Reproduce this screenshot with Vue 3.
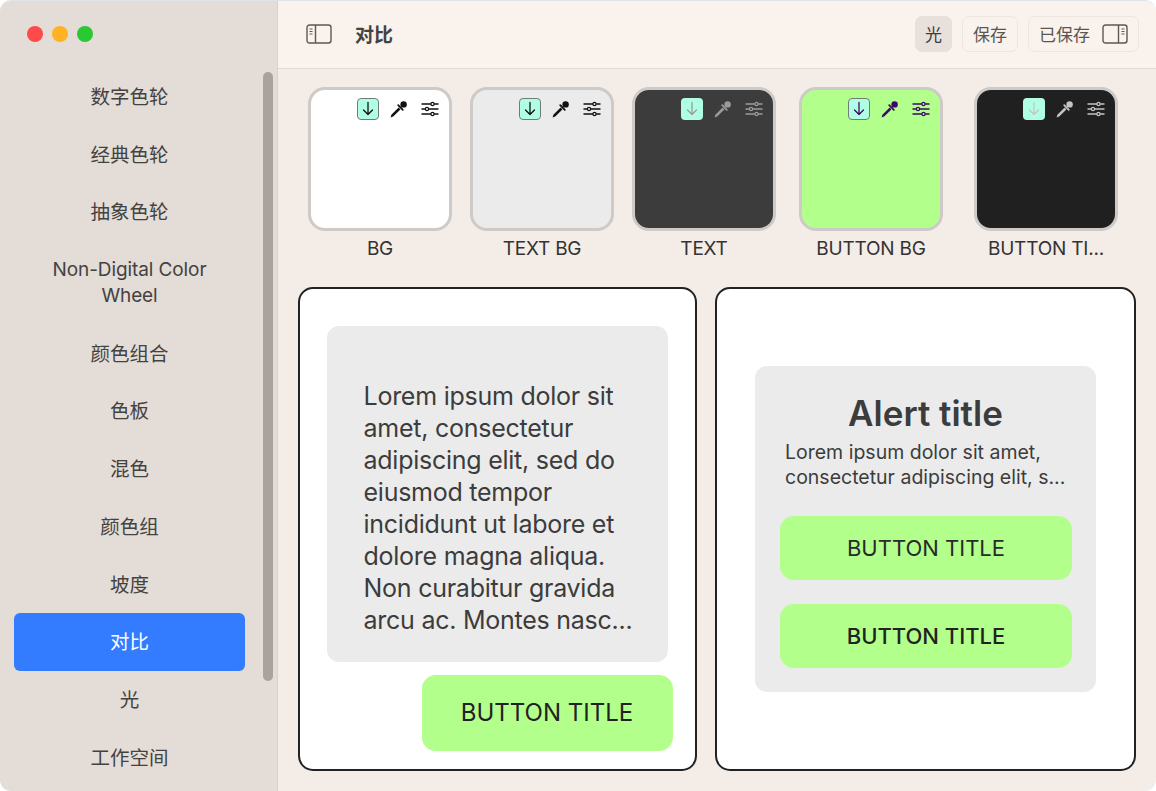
<template>
  <div class="window">
    <aside class="sidebar">
      <div class="lights">
        <span class="light red"></span>
        <span class="light yellow"></span>
        <span class="light green"></span>
      </div>
      <nav class="nav">
        <div
          v-for="item in navItems"
          :key="item"
          class="nav-item"
          :class="{ active: item === '对比', latin: item.startsWith('Non') }"
        >{{ item }}</div>
      </nav>
      <div class="scrollbar"></div>
    </aside>

    <main class="main">
      <header class="toolbar">
        <svg class="panel-icon" viewBox="0 0 26 20" fill="none" stroke="#5f5753" stroke-width="1.4">
          <rect x="1" y="1" width="24" height="18" rx="2.5" />
          <path d="M9.5 1v18" />
          <path d="M3.5 5h3M3.5 7.5h3M3.5 10h3" stroke-width="1" />
        </svg>
        <h1 class="title">对比</h1>
        <div class="actions">
          <button class="btn selected">光</button>
          <button class="btn">保存</button>
          <button class="btn saved">
            已保存
            <svg class="panel-icon" viewBox="0 0 26 20" fill="none" stroke="#5f5753" stroke-width="1.4">
              <rect x="1" y="1" width="24" height="18" rx="2.5" />
              <path d="M16.5 1v18" />
              <path d="M19.5 5h3M19.5 7.5h3M19.5 10h3" stroke-width="1" />
            </svg>
          </button>
        </div>
      </header>

      <section class="swatches">
        <div v-for="s in swatches" :key="s.label" class="swatch">
          <div class="card" :style="{ background: s.bg }">
            <div class="tools" :style="{ color: s.fg }">
              <span class="pin" :class="{ framed: s.framed }">
                <svg viewBox="0 0 20 20" width="20" height="20" fill="none" stroke="currentColor" stroke-width="1.3" stroke-linecap="round" stroke-linejoin="round">
                  <path d="M10 3.5v12M5.5 11l4.5 4.5 4.5-4.5" />
                </svg>
              </span>
              <svg class="tool" viewBox="0 0 18 18" fill="currentColor">
                <path d="M.6 17.4l.8-2.6 7.2-7.2 1.8 1.8-7.2 7.2z" />
                <path d="M8.2 5.2l4.6 4.6" stroke="currentColor" stroke-width="1.8" stroke-linecap="round" />
                <circle cx="13.6" cy="4.4" r="3.2" />
              </svg>
              <svg class="tool sliders" viewBox="0 0 18 18" fill="none" stroke="currentColor" stroke-width="1.4">
                <path d="M.5 4h17M.5 9h17M.5 14h17" />
                <circle cx="11.5" cy="4" r="1.6" :fill="s.bg" stroke-width="1.2" />
                <circle cx="6" cy="9" r="1.6" :fill="s.bg" stroke-width="1.2" />
                <circle cx="11.5" cy="14" r="1.6" :fill="s.bg" stroke-width="1.2" />
              </svg>
            </div>
          </div>
          <div class="swatch-label">{{ s.label }}</div>
        </div>
      </section>

      <section class="previews">
        <div class="preview left">
          <div class="text-box">
            <p class="lorem">Lorem ipsum dolor sit amet, consectetur adipiscing elit, sed do eiusmod tempor incididunt ut labore et dolore magna aliqua. Non curabitur gravida arcu ac. Montes nasc...</p>
          </div>
          <button class="cta large">BUTTON TITLE</button>
        </div>
        <div class="preview right">
          <div class="alert">
            <h2 class="alert-title">Alert title</h2>
            <p class="alert-text">Lorem ipsum dolor sit amet,<br />consectetur adipiscing elit, s...</p>
            <button class="cta first">BUTTON TITLE</button>
            <button class="cta second">BUTTON TITLE</button>
          </div>
        </div>
      </section>
    </main>
  </div>
</template>

<script setup>
const navItems = [
  '数字色轮',
  '经典色轮',
  '抽象色轮',
  'Non-Digital Color Wheel',
  '颜色组合',
  '色板',
  '混色',
  '颜色组',
  '坡度',
  '对比',
  '光',
  '工作空间',
]

const swatches = [
  { label: 'BG', bg: '#ffffff', fg: '#111111', framed: true },
  { label: 'TEXT BG', bg: '#ebebeb', fg: '#111111', framed: true },
  { label: 'TEXT', bg: '#3c3c3c', fg: '#9a9a9a', framed: false },
  { label: 'BUTTON BG', bg: '#b2ff8c', fg: '#3c0a66', framed: true },
  { label: 'BUTTON TI...', bg: '#202020', fg: '#c4c4c4', framed: false },
]
</script>

<style>
html,
body {
  margin: 0;
  background: #ffffff;
}
</style>

<style scoped>
.window {
  width: 1156px;
  height: 791px;
  display: flex;
  overflow: hidden;
  box-sizing: border-box;
  border-top: 1px solid #e2e4e5;
  border-radius: 11px;
  font-family: Inter, "Noto Sans CJK SC", sans-serif;
  color: #3c3c3c;
}

.sidebar {
  position: relative;
  width: 278px;
  flex-shrink: 0;
  box-sizing: border-box;
  background: #e3dcd7;
  border-right: 1px solid #d8d1cc;
}

.lights {
  height: 67px;
  display: flex;
  align-items: center;
  gap: 9px;
  padding: 0 0 0.5px 27px;
  box-sizing: border-box;
}

.light {
  width: 16px;
  height: 16px;
  border-radius: 50%;
}

.red { background: #fe4a4a; }
.yellow { background: #ffb224; }
.green { background: #2ac832; }

.nav {
  padding: 0 32px 0 14px;
}

.nav-item {
  padding: 16px 30px 15.7px;
  font-size: 19.5px;
  line-height: 26px;
  text-align: center;
  color: #444240;
  border-radius: 6px;
}

.nav-item.latin {
  font-size: 19px;
  letter-spacing: -0.1px;
}

.nav-item.active {
  background: #337cff;
  color: #ffffff;
}

.scrollbar {
  position: absolute;
  left: 263px;
  top: 71px;
  width: 10px;
  height: 609px;
  border-radius: 5px;
  background: #a8a39e;
}

.main {
  flex: 1;
  min-width: 0;
  background: #f4ece7;
}

.toolbar {
  height: 68px;
  box-sizing: border-box;
  display: flex;
  align-items: center;
  padding: 0 17px 1px 28px;
  background: #faf2ec;
  border-bottom: 1px solid #e0d9d4;
}

.panel-icon {
  width: 26px;
  height: 20px;
  flex-shrink: 0;
}

.title {
  margin: 0 0 2px 23px;
  font-size: 19px;
  font-weight: 700;
  color: #444240;
}

.actions {
  margin-left: auto;
  display: flex;
  gap: 10px;
}

.btn {
  height: 36px;
  padding: 0 10px 2px;
  display: flex;
  align-items: center;
  gap: 12px;
  box-sizing: border-box;
  border: 1px solid #eee5df;
  border-radius: 7px;
  background: transparent;
  font: inherit;
  font-size: 17px;
  color: #5c5551;
}

.btn .panel-icon {
  margin-top: 2px;
}

.btn.selected {
  width: 37px;
  justify-content: center;
  padding: 0 0 2px;
  background: #e8e0da;
  border-color: #e8e0da;
  color: #3c3c3c;
}

.swatches {
  display: grid;
  grid-template-columns: 162px 162px 162px 172px 178px;
  padding: 18px 0 0 21px;
}

.swatch {
  display: flex;
  flex-direction: column;
  align-items: center;
}

.card {
  width: 144px;
  height: 144px;
  box-sizing: border-box;
  border: 3px solid #cdcac8;
  border-radius: 17px;
}

.tools {
  display: flex;
  justify-content: flex-end;
  align-items: center;
  gap: 11px;
  padding: 8px 10px 0 0;
}

.pin {
  width: 22px;
  height: 22px;
  box-sizing: border-box;
  display: flex;
  align-items: center;
  justify-content: center;
  border-radius: 4px;
  background: #b0ffe4;
}

.pin.framed {
  border: 1px solid #6f7c78;
}

.tool {
  width: 18px;
  height: 18px;
}

.tool.sliders {
  margin-left: 2px;
}

.swatch-label {
  margin-top: 6px;
  font-size: 19px;
  line-height: 24px;
  letter-spacing: -0.2px;
  color: #333333;
}

.previews {
  display: grid;
  grid-template-columns: 399.5px 420.5px;
  gap: 18px;
  padding: 26px 0 0 19.5px;
}

.preview {
  height: 484px;
  box-sizing: border-box;
  border: 2.5px solid #222222;
  border-radius: 15px;
  background: #ffffff;
}

.preview.left {
  display: flex;
  flex-direction: column;
  align-items: flex-start;
  padding: 36.5px 0 0 27px;
}

.text-box {
  width: 341px;
  height: 336px;
  box-sizing: border-box;
  display: flex;
  align-items: center;
  padding: 28px 30px 0 37px;
  border-radius: 12px;
  background: #ebebeb;
}

.lorem {
  margin: 0;
  font-size: 25px;
  line-height: 32px;
  color: #3c3c3c;
  letter-spacing: -0.25px;
}

.cta {
  display: block;
  border: none;
  background: #b2ff8c;
  font: inherit;
  color: #222222;
}

.cta.large {
  width: 251px;
  height: 76px;
  margin: 13px 0 0 95px;
  border-radius: 14px;
  font-size: 24px;
}

.preview.right {
  display: flex;
  align-items: center;
  padding-left: 38px;
}

.alert {
  width: 341px;
  height: 326px;
  box-sizing: border-box;
  padding: 26px 24px 0;
  border-radius: 12px;
  background: #ebebeb;
}

.alert-title {
  margin: 0;
  font-size: 35px;
  line-height: 42px;
  font-weight: 600;
  text-align: center;
  color: #3c3c3c;
}

.alert-text {
  margin: 6px 0 0 6px;
  font-size: 19.5px;
  line-height: 25px;
  color: #3c3c3c;
  white-space: nowrap;
}

.alert .cta {
  width: 292px;
  height: 64px;
  margin-left: 1px;
  border-radius: 14px;
  font-size: 22px;
}

.cta.first {
  margin-top: 26px;
  color: #2a2a2a;
}

.cta.second {
  margin-top: 24px;
  font-weight: 500;
}
</style>
